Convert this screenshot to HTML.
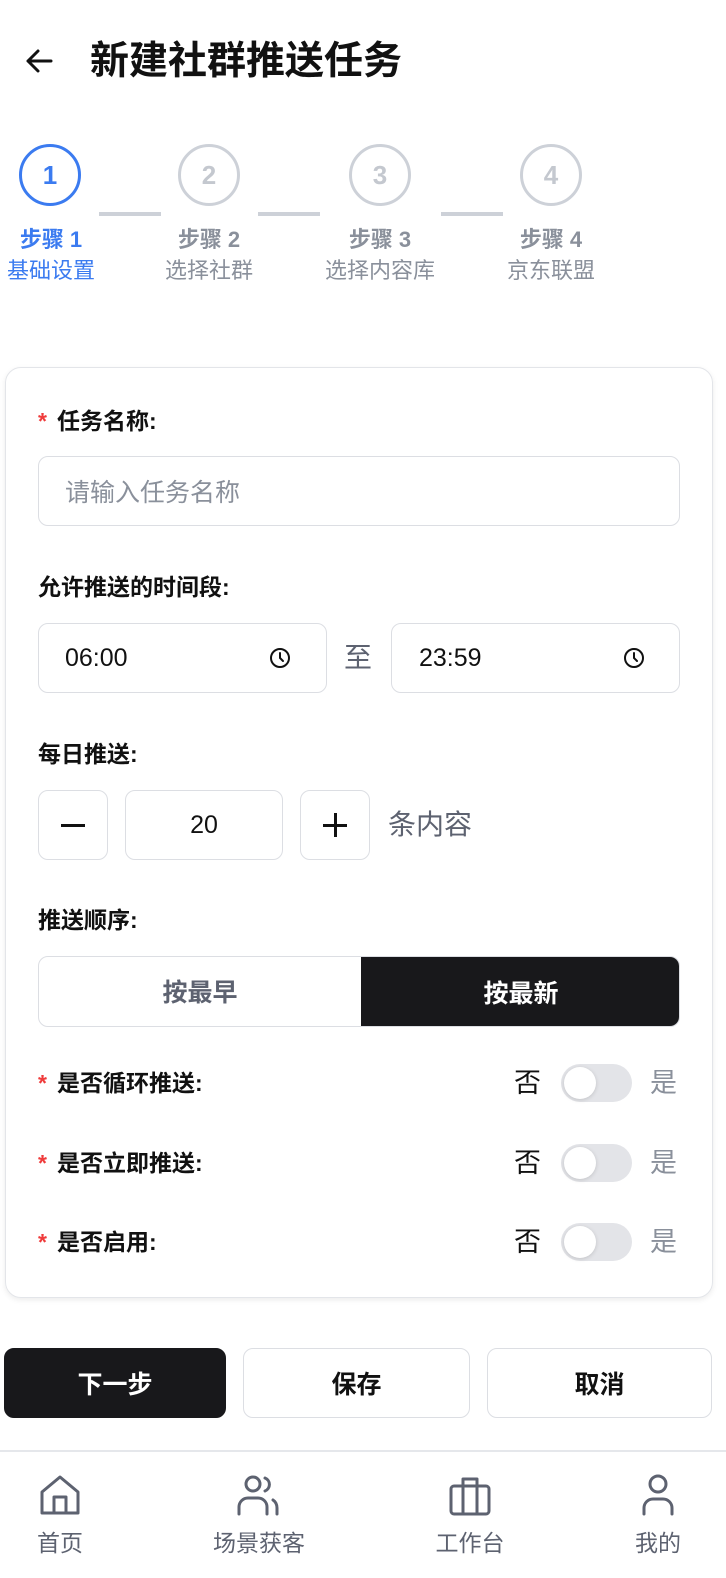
<!DOCTYPE html>
<html><head><meta charset="utf-8">
<style>
*{margin:0;padding:0;box-sizing:border-box}
body{width:726px;height:1578px;background:#fff;position:relative;overflow:hidden;font-family:"Liberation Sans","Noto Sans CJK SC",sans-serif;color:#111}
.a{position:absolute}
.circ{position:absolute;width:62px;height:62px;border-radius:50%;border:3.5px solid #cdd1d8;color:#c4c8cf;font-size:26px;font-weight:700;display:flex;align-items:center;justify-content:center}
.line{position:absolute;top:212px;height:4px;background:#cdd1d8}
.sl{position:absolute;width:180px;text-align:center;font-size:22px;line-height:31px;color:#8a909b}
.sl b{display:block}
.lab{position:absolute;left:38px;font-size:23px;font-weight:700;color:#111;line-height:30px}
.lab i{color:#ef3b3b;font-style:normal;margin-right:10px}
.box{position:absolute;border:1.5px solid #dcdee3;border-radius:10px;background:#fff;display:flex;align-items:center}
.tog{position:absolute;left:561px;width:71px;height:38px;border-radius:19px;background:#e3e4e8}
.tog::after{content:"";position:absolute;left:3px;top:3px;width:32px;height:32px;border-radius:50%;background:#fff;box-shadow:0 1px 4px rgba(0,0,0,.15)}
.no{position:absolute;left:514px;font-size:27px;color:#111;line-height:38px}
.yes{position:absolute;left:650px;font-size:27px;color:#8a909b;line-height:38px}
.btn{position:absolute;top:1348px;height:70px;border-radius:10px;border:1.5px solid #dcdee3;display:flex;align-items:center;justify-content:center;font-size:25px;font-weight:700}
.nav{position:absolute;top:1524px;font-size:23px;color:#5d6270;width:120px;text-align:center}
</style></head><body>
<svg class="a" style="left:24px;top:46px" width="30" height="30" viewBox="0 0 30 30"><path d="M27 15H4M14 5L4 15l10 10" fill="none" stroke="#111" stroke-width="3" stroke-linecap="round" stroke-linejoin="round"/></svg>
<div class="a" style="left:90px;top:36px;font-size:39px;font-weight:700;line-height:52px">新建社群推送任务</div>

<div class="circ" style="left:19px;top:144px;border-color:#3b7bf0;color:#3b7bf0">1</div>
<div class="circ" style="left:178px;top:144px">2</div>
<div class="circ" style="left:349px;top:144px">3</div>
<div class="circ" style="left:520px;top:144px">4</div>
<div class="line" style="left:99px;width:62px"></div>
<div class="line" style="left:258px;width:62px"></div>
<div class="line" style="left:441px;width:62px"></div>
<div class="sl" style="left:-39px;top:224px;color:#3b7bf0"><b>步骤 1</b>基础设置</div>
<div class="sl" style="left:119px;top:224px"><b>步骤 2</b>选择社群</div>
<div class="sl" style="left:290px;top:224px"><b>步骤 3</b>选择内容库</div>
<div class="sl" style="left:461px;top:224px"><b>步骤 4</b>京东联盟</div>

<div class="a" style="left:5px;top:367px;width:708px;height:931px;border:1.5px solid #e3e5e9;border-radius:16px;box-shadow:0 2px 6px rgba(0,0,0,.08)"></div>

<div class="lab" style="top:406px"><i>*</i>任务名称:</div>
<div class="box" style="left:38px;top:456px;width:642px;height:70px;padding-left:26px;font-size:25px;color:#8a909b">请输入任务名称</div>

<div class="lab" style="top:572px">允许推送的时间段:</div>
<div class="box" style="left:38px;top:623px;width:289px;height:70px;padding-left:26px;font-size:25px">06:00</div>
<svg class="a" style="left:268px;top:646px" width="24" height="24" viewBox="0 0 24 24"><circle cx="12" cy="12" r="9" fill="none" stroke="#111" stroke-width="2"/><path d="M12 7v5l3 3" fill="none" stroke="#111" stroke-width="2" stroke-linecap="round"/></svg>
<div class="a" style="left:344px;top:640px;font-size:28px;color:#5d6270;line-height:36px">至</div>
<div class="box" style="left:391px;top:623px;width:289px;height:70px;padding-left:27px;font-size:25px">23:59</div>
<svg class="a" style="left:622px;top:646px" width="24" height="24" viewBox="0 0 24 24"><circle cx="12" cy="12" r="9" fill="none" stroke="#111" stroke-width="2"/><path d="M12 7v5l3 3" fill="none" stroke="#111" stroke-width="2" stroke-linecap="round"/></svg>

<div class="lab" style="top:739px">每日推送:</div>
<div class="box" style="left:38px;top:790px;width:70px;height:70px"></div>
<div class="a" style="left:61px;top:824px;width:24px;height:2.5px;background:#111"></div>
<div class="box" style="left:125px;top:790px;width:158px;height:70px;justify-content:center;font-size:25px">20</div>
<div class="box" style="left:300px;top:790px;width:70px;height:70px"></div>
<div class="a" style="left:323px;top:824px;width:24px;height:2.5px;background:#111"></div>
<div class="a" style="left:334px;top:813px;width:2.5px;height:24px;background:#111"></div>
<div class="a" style="left:388px;top:806px;font-size:28px;color:#5d6270;line-height:38px">条内容</div>

<div class="lab" style="top:905px">推送顺序:</div>
<div class="box" style="left:38px;top:956px;width:642px;height:71px;overflow:hidden">
<div class="a" style="left:0;top:0;width:322px;height:68px;display:flex;align-items:center;justify-content:center;font-size:25px;font-weight:700;color:#5d6270">按最早</div>
<div class="a" style="left:322px;top:-1px;width:320px;height:71px;background:#18181b;display:flex;align-items:center;justify-content:center;font-size:25px;font-weight:700;color:#fff">按最新</div>
</div>

<div class="lab" style="top:1068px"><i>*</i>是否循环推送:</div>
<div class="no" style="top:1064px">否</div><div class="tog" style="top:1064px"></div><div class="yes" style="top:1064px">是</div>
<div class="lab" style="top:1148px"><i>*</i>是否立即推送:</div>
<div class="no" style="top:1144px">否</div><div class="tog" style="top:1144px"></div><div class="yes" style="top:1144px">是</div>
<div class="lab" style="top:1227px"><i>*</i>是否启用:</div>
<div class="no" style="top:1223px">否</div><div class="tog" style="top:1223px"></div><div class="yes" style="top:1223px">是</div>

<div class="btn" style="left:4px;width:222px;background:#18181b;color:#fff;border-color:#18181b">下一步</div>
<div class="btn" style="left:243px;width:227px">保存</div>
<div class="btn" style="left:487px;width:225px">取消</div>

<div class="a" style="left:0;top:1450px;width:726px;height:2px;background:#e5e7eb"></div>
<svg class="a" style="left:38px;top:1474px" width="44" height="44" viewBox="0 0 44 44" fill="none" stroke="#5d6270" stroke-width="3" stroke-linejoin="round"><path d="M4 39V18L22 3l18 15v21z"/><path d="M16 39V23h12v16"/></svg>
<svg class="a" style="left:236px;top:1474px" width="46" height="44" viewBox="0 0 46 44" fill="none" stroke="#5d6270" stroke-width="3" stroke-linecap="round"><circle cx="17" cy="10" r="7"/><path d="M3 40V33c0-5 4-9 9-9h10c5 0 9 4 9 9v7"/><path d="M29 4a7 7 0 0 1 0 13M37 26c3 2 4 5 4 8v6"/></svg>
<svg class="a" style="left:448px;top:1474px" width="44" height="44" viewBox="0 0 44 44" fill="none" stroke="#5d6270" stroke-width="3" stroke-linejoin="round"><rect x="3" y="12" width="38" height="28" rx="3"/><path d="M15 12V5h14v7M15 12v28M29 12v28"/></svg>
<svg class="a" style="left:640px;top:1474px" width="36" height="44" viewBox="0 0 36 44" fill="none" stroke="#5d6270" stroke-width="3" stroke-linecap="round"><circle cx="18" cy="10" r="8"/><path d="M4 40v-6c0-5 4-9 9-9h10c5 0 9 4 9 9v6"/></svg>
<div class="nav" style="left:0">首页</div>
<div class="nav" style="left:199px">场景获客</div>
<div class="nav" style="left:410px">工作台</div>
<div class="nav" style="left:598px">我的</div>
</body></html>
